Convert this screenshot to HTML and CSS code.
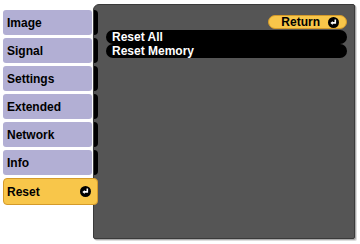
FILE: index.html
```html
<!DOCTYPE html>
<html>
<head>
    <title>Reset</title>
    <link rel="stylesheet" href="styles.css">
</head>
<body>
    <div class="screen">
        <div class="tabs">
            <div class="tab">Image</div>
            <div class="tab">Signal</div>
            <div class="tab">Settings</div>
            <div class="tab">Extended</div>
            <div class="tab">Network</div>
            <div class="tab">Info</div>
            <div class="tab active">Reset
                <svg class="enter" width="11" height="11" viewBox="0 0 11 11"><circle cx="5.5" cy="5.5" r="5.5" fill="#000"/><path d="M7.3 2.6v3.3H4" fill="none" stroke="#fff" stroke-width="1.6"/><path d="M2.4 5.9l2.3-2v4z" fill="#fff"/></svg>
            </div>
        </div>
        <div class="panel">
            <div class="top">
                <div class="return">Return
                    <svg class="enter" width="11" height="11" viewBox="0 0 11 11"><circle cx="5.5" cy="5.5" r="5.5" fill="#000"/><path d="M7.3 2.6v3.3H4" fill="none" stroke="#fff" stroke-width="1.6"/><path d="M2.4 5.9l2.3-2v4z" fill="#fff"/></svg>
                </div>
            </div>
            <div class="item">Reset All</div>
            <div class="item">Reset Memory</div>
        </div>
    </div>
</body>
</html>
```
FILE: styles.css
```css
body {
    margin: 0;
    background-color: #fff;
    font-family: "Liberation Sans", Arial, sans-serif;
    font-weight: bold;
    font-size: 12px;
}
.screen {
    display: flex;
    width: 360px;
    height: 244px;
}
.tabs {
    display: flex;
    flex-direction: column;
    gap: 3px;
    padding: 10px 0 0 3px;
    width: 90px;
    position: relative;
    z-index: 1;
}
.tab {
    position: relative;
    height: 25px;
    box-sizing: border-box;
    background-color: #b2afd4;
    border-radius: 3px;
    padding-left: 4px;
    display: flex;
    align-items: center;
    color: #000;
    margin-right: 1px;
}
.tab::after {
    content: "";
    position: absolute;
    right: -6px;
    top: 0;
    bottom: 0;
    width: 4px;
    background-color: #000;
    border-radius: 0 4px 4px 0;
}
.tab.active {
    background-color: #f8c64a;
    border: 1px solid #d49a2a;
    margin-right: -5px;
    height: 27px;
    border-radius: 4px;
    justify-content: space-between;
    padding: 0 6px 0 3px;
}
.tab.active::after {
    display: none;
}
.enter {
    display: block;
}
.panel {
    margin-top: 4px;
    width: 262px;
    height: 235px;
    box-sizing: border-box;
    background-color: #555;
    border: 1px solid #3a3a3a;
    border-radius: 6px 2px 2px 2px;
    box-shadow: 1px 1px 0 #aaa, 2px 2px 0 #ddd;
    padding: 10px 7px 0 12px;
}
.top {
    display: flex;
    justify-content: flex-end;
    margin-bottom: 1px;
}
.return {
    width: 79px;
    height: 14px;
    box-sizing: border-box;
    background-color: #f8c64a;
    border: 1px solid #d49a2a;
    border-radius: 7px;
    display: flex;
    align-items: center;
    justify-content: flex-end;
    gap: 8px;
    padding-right: 7px;
    color: #000;
}
.item {
    height: 14px;
    line-height: 14px;
    background-color: #000;
    color: #fff;
    border-radius: 7px;
    padding-left: 6px;
}
```
